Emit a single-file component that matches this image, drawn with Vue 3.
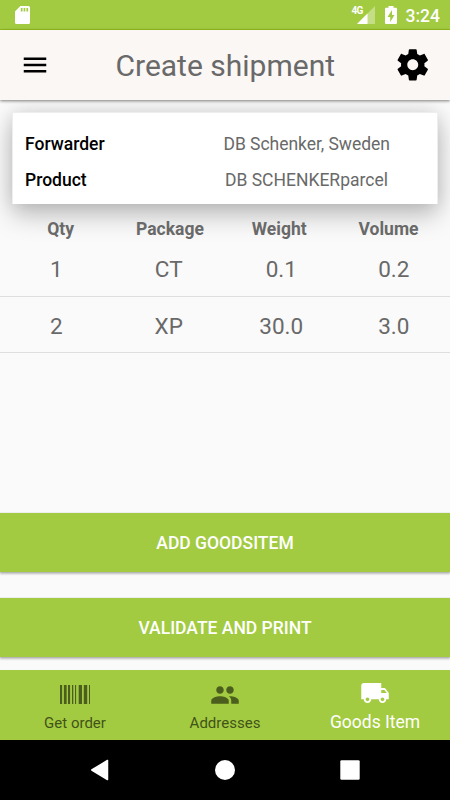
<script setup>
const details = [
  { label: 'Forwarder', value: 'DB Schenker, Sweden', kind: 'first' },
  { label: 'Product', value: 'DB SCHENKERparcel', kind: 'second' }
]
const headings = ['Qty', 'Package', 'Weight', 'Volume']
const goods = [
  ['1', 'CT', '0.1', '0.2'],
  ['2', 'XP', '30.0', '3.0']
]
const bars = [
  [0, 2.1], [3.9, 2.7], [8, 2.1], [12, 1.3], [15, 1.1],
  [18.7, 3.3], [23.8, 3.4], [29, 1]
]
</script>

<template>
  <div class="screen">
    <header class="status">
      <svg class="sd" viewBox="0 0 15 18"><path fill-rule="evenodd" d="M5.400 0H13.500Q15 0 15 1.500V16.500Q15 18 13.500 18H1.500Q0 18 0 16.500V5.400ZM5.800 2V5.500H7.500V2ZM8.600 2V5.500H10.300V2ZM11.400 2V5.500H13.100V2Z" /></svg>
      <span class="network">4G</span>
      <svg class="signal" viewBox="0 0 18 18"><path opacity=".36" d="M18 0V18H0Z" /><path d="M10.500 7.500V18H0Z" /></svg>
      <svg class="battery" viewBox="0 0 12 18"><path fill-rule="evenodd" d="M3.500 0H8.500V1.800H11Q12 1.800 12 2.800V17Q12 18 11 18H1Q0 18 0 17V2.800Q0 1.800 1 1.800H3.500ZM7 3.900L2.500 11H5.200V15.900L9.500 8.900H7Z" /></svg>
      <span class="clock">3:24</span>
    </header>

    <div class="toolbar">
      <svg class="menu" viewBox="0 0 24 24"><path d="M3 18h18v-2H3v2zm0-5h18v-2H3v2zm0-7v2h18V6H3z" /></svg>
      <h1>Create shipment</h1>
      <svg class="gear" viewBox="0 0 24 24"><path d="M19.43 12.98c.04-.32.07-.64.07-.98s-.03-.66-.07-.98l2.110-1.650c.19-.15.24-.42.12-.64l-2-3.460c-.12-.22-.39-.3-.61-.22l-2.490 1c-.52-.4-1.080-.73-1.690-.98l-.38-2.650C14.460 2.180 14.250 2 14 2h-4c-.25 0-.46.18-.49.42l-.38 2.650c-.61.25-1.170.59-1.690.98l-2.490-1c-.23-.09-.49 0-.61.22l-2 3.460c-.13.22-.07.49.12.64l2.110 1.650c-.04.32-.07.65-.07.98s.03.66.07.98l-2.110 1.650c-.19.15-.24.42-.12.64l2 3.460c.12.22.39.3.61.22l2.490-1c.52.4 1.080.73 1.690.98l.38 2.650c.03.24.24.42.49.42h4c.25 0 .46-.18.49-.42l.38-2.650c.61-.25 1.170-.59 1.690-.98l2.490 1c.23.09.49 0 .61-.22l2-3.460c.12-.22.07-.49-.12-.64l-2.110-1.650zM12 15.500c-1.930 0-3.500-1.570-3.500-3.500s1.570-3.500 3.500-3.500 3.500 1.570 3.500 3.500-1.570 3.500-3.500 3.500z" /></svg>
    </div>

    <main>
      <section class="card">
        <div v-for="d in details" :key="d.label" class="detail">
          <span class="label">{{ d.label }}</span>
          <span class="value" :class="d.kind">{{ d.value }}</span>
        </div>
      </section>

      <div class="headings">
        <span v-for="h in headings" :key="h">{{ h }}</span>
      </div>
      <div v-for="row in goods" :key="row[0]" class="row">
        <span v-for="cell in row" :key="cell">{{ cell }}</span>
      </div>

      <div class="actions">
        <button class="add">ADD GOODSITEM</button>
        <button class="print">VALIDATE AND PRINT</button>
      </div>
    </main>

    <nav class="tabs">
      <div class="tab">
        <svg class="barcode" viewBox="0 0 30 19"><rect v-for="b in bars" :key="b[0]" :x="b[0]" y="0" :width="b[1]" height="19" /></svg>
        <span>Get order</span>
      </div>
      <div class="tab">
        <svg class="people" viewBox="0 0 24 24"><path d="M16 11c1.660 0 2.990-1.340 2.990-3S17.660 5 16 5c-1.660 0-3 1.340-3 3s1.340 3 3 3zm-8 0c1.660 0 2.990-1.340 2.990-3S9.660 5 8 5C6.340 5 5 6.340 5 8s1.340 3 3 3zm0 2c-2.330 0-7 1.170-7 3.500V19h14v-2.500c0-2.330-4.670-3.500-7-3.500zm8 0c-.29 0-.62.02-.97.05 1.160.84 1.970 1.970 1.970 3.450V19h6v-2.500c0-2.330-4.670-3.500-7-3.500z" /></svg>
        <span>Addresses</span>
      </div>
      <div class="tab active">
        <svg class="truck" viewBox="0 0 24 24"><path d="M20 8h-3V4H3c-1.100 0-2 .9-2 2v11h2c0 1.660 1.340 3 3 3s3-1.340 3-3h6c0 1.660 1.340 3 3 3s3-1.340 3-3h2v-5l-3-4zM6 18.500c-.83 0-1.500-.67-1.500-1.500s.67-1.500 1.500-1.500 1.500.67 1.500 1.500-.67 1.500-1.500 1.500zm13.500-9l1.960 2.500H17V9.500h2.500zm-1.500 9c-.83 0-1.500-.67-1.500-1.500s.67-1.500 1.500-1.500 1.500.67 1.500 1.500-.67 1.500-1.500 1.500z" /></svg>
        <span>Goods Item</span>
      </div>
    </nav>

    <footer class="system">
      <svg viewBox="0 0 20 22"><path d="M17.500 1.500V20.500L1.800 11Z" stroke="#fff" stroke-width="1.500" stroke-linejoin="round" /></svg>
      <svg viewBox="0 0 20 20"><circle cx="10" cy="10" r="10" /></svg>
      <svg viewBox="0 0 20 20"><rect x=".3" y=".3" width="19.400" height="19.400" rx="1.200" /></svg>
    </footer>
  </div>
</template>

<style>
body {
  margin: 0;
}
</style>

<style scoped>
.screen {
  width: 450px;
  height: 800px;
  display: flex;
  flex-direction: column;
  overflow: hidden;
  background: #fafafa;
  font-family: Roboto, "Liberation Sans", sans-serif;
  color: #696969;
  white-space: nowrap;
}
svg {
  display: block;
  flex: none;
}
.status {
  box-sizing: border-box;
  height: 30px;
  flex: none;
  display: flex;
  align-items: flex-start;
  padding: 6px 10px 0 15px;
  background: #a2cb41;
  border-bottom: 1px solid #97c21f;
  color: #fff;
  fill: #fff;
}
.sd {
  width: 15px;
  height: 18px;
}
.network {
  width: 12px;
  margin-left: auto;
  margin-right: -7px;
  font-size: 10px;
  line-height: 9px;
  font-weight: 700;
  letter-spacing: -0.900px;
}
.signal {
  width: 18px;
  height: 18px;
}
.battery {
  width: 12px;
  height: 18px;
  margin-left: 10px;
}
.clock {
  margin-left: 9px;
  font-size: 17.500px;
  line-height: 20px;
  font-weight: 500;
}
.toolbar {
  position: relative;
  z-index: 2;
  height: 70px;
  flex: none;
  display: flex;
  align-items: center;
  justify-content: space-between;
  box-sizing: border-box;
  padding: 0 19px 0 20px;
  background: #fbf7f5;
  box-shadow: 0 1px 3px rgba(0, 0, 0, 0.5);
}
.menu {
  width: 30px;
  height: 30px;
}
.gear {
  width: 37.500px;
  height: 37.500px;
}
h1 {
  margin: 2px 0 0 7px;
  font-size: 30px;
  line-height: 36px;
  font-weight: 400;
}
main {
  flex: 1;
  display: flex;
  flex-direction: column;
  min-height: 0;
}
.card {
  box-sizing: border-box;
  height: 92px;
  margin: 12px 12px 0;
  padding: 13px 12px 0;
  border: 1px solid #eee;
  border-bottom: 0;
  background: #fff;
  box-shadow: 0 12px 24px rgba(0, 0, 0, 0.22), 0 0 18px rgba(0, 0, 0, 0.13);
}
.detail {
  display: grid;
  grid-template-columns: 198.500px auto;
  height: 36px;
  line-height: 36px;
  font-size: 17.500px;
}
.label {
  font-weight: 500;
  color: #000;
}
.first {
  letter-spacing: -0.040px;
}
.second {
  padding-left: 1.500px;
}
.headings,
.row {
  position: relative;
  display: grid;
  text-align: center;
}
.headings {
  height: 36px;
  grid-template-columns: repeat(4, 109.300px);
  padding: 0 6px;
  font-size: 17.500px;
  line-height: 51px;
  font-weight: 700;
}
.row {
  box-sizing: border-box;
  height: 56.500px;
  grid-template-columns: repeat(4, 112.500px);
  font-size: 22.500px;
  line-height: 58px;
  border-bottom: 1.500px solid #dedede;
}
.actions {
  margin-top: auto;
  display: flex;
  flex-direction: column;
  gap: 26px;
  padding-bottom: 13px;
}
button {
  height: 59px;
  padding: 0;
  border: 0;
  background: #a2cb41;
  color: #fff;
  font: 500 17.500px/60px Roboto, "Liberation Sans", sans-serif;
  box-shadow: 0 2px 2px rgba(0, 0, 0, 0.25), 0 0 1px rgba(0, 0, 0, 0.3);
}
.tabs {
  height: 70px;
  flex: none;
  display: grid;
  grid-template-columns: repeat(3, 1fr);
  background: #a2cb41;
}
.tab {
  display: flex;
  flex-direction: column;
  align-items: center;
  color: #425319;
  fill: #4b5e1e;
  font-size: 15px;
  line-height: 20px;
}
.barcode {
  width: 30px;
  height: 19px;
  margin: 15px 0 9px;
}
.people {
  width: 30px;
  height: 30px;
  margin: 10px 0 3px;
}
.truck {
  width: 30px;
  height: 30px;
  margin: 7.500px 0 4.500px;
}
.active {
  color: #fff;
  fill: #fff;
  font-size: 17.500px;
}
.system {
  height: 60px;
  flex: none;
  display: flex;
  align-items: center;
  justify-content: center;
  gap: 105px;
  background: #000;
  fill: #fff;
}
.system svg {
  width: 20px;
}
</style>
